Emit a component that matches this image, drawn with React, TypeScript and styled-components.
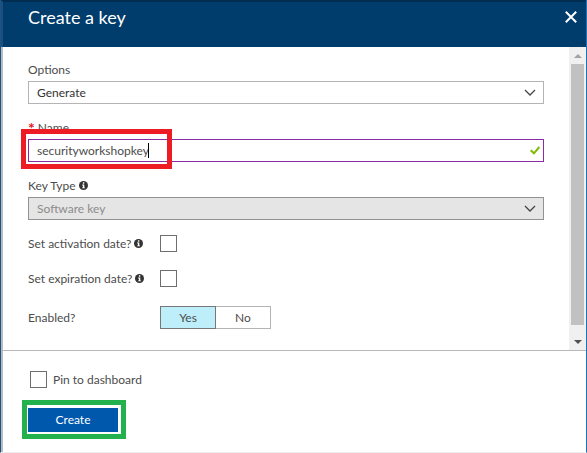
import React, { useState } from "react";
import styled, { createGlobalStyle } from "styled-components";

const GlobalStyle = createGlobalStyle`
  * { box-sizing: border-box; }
  body {
    margin: 0;
    background: #fff;
    color: #4c4c4c;
    font: 12px/16px Lato, "Noto Sans", sans-serif;
  }
  button, input, select { font: inherit; color: inherit; margin: 0; }
`;

const Blade = styled.main`
  display: flex;
  flex-direction: column;
  min-height: 100vh;
  border-left: 1px solid #1b5288;
  border-right: 1px solid #2171b5;
  border-bottom: 1px solid #efefef;
`;

const Header = styled.header`
  display: flex;
  justify-content: space-between;
  align-items: flex-start;
  height: 47px;
  padding: 3px 9px 0 25px;
  background: #003c6c;
  border-top: 2px solid #002c50;
  border-left: 2px solid #1c4f7d;
  color: #fff;
`;

const Title = styled.h1`
  margin: 0;
  font-size: 18px;
  line-height: 25px;
  font-weight: 400;
`;

const CloseButton = styled.button`
  display: flex;
  padding: 6px 0;
  border: 0;
  background: none;
  color: #fff;
`;

const Body = styled.div`
  display: flex;
  flex: 1;
  border-left: 2px solid #bababa;
`;

const Form = styled.form`
  flex: 1;
  min-width: 0;
  padding: 14px 25px 12px;
`;

const Field = styled.div`
  margin-bottom: 15px;
`;

const FieldLabel = styled.label`
  display: flex;
  align-items: center;
  gap: 3px;
  height: 17px;
  margin-bottom: 3px;
  white-space: nowrap;
`;

const Required = styled.span`
  color: #e81123;
  font-size: 16px;
  font-weight: 700;
  line-height: 16px;
`;

const Control = styled.div`
  position: relative;
  display: flex;
`;

const Select = styled.select`
  appearance: none;
  width: 100%;
  height: 23px;
  padding: 0 28px 0 8px;
  border: 1px solid #b4b4b4;
  border-radius: 0;
  background: #fff;
  color: #333;
  outline: 0;
  &:disabled {
    border-color: #929292;
    background: #e5e5e5;
    color: #8c8c8c;
    opacity: 1;
  }
`;

const TextInput = styled.input`
  width: 100%;
  height: 23px;
  padding: 0 28px 0 8px;
  border: 1px solid #8a2da5;
  border-radius: 0;
  background: #fff;
  outline: 0;
`;

const ControlIcon = styled.span<{ $right: number }>`
  position: absolute;
  right: ${({ $right }) => $right}px;
  top: 0;
  bottom: 0;
  display: flex;
  align-items: center;
  pointer-events: none;
`;

const Caret = styled.span`
  position: absolute;
  left: 120px;
  top: 4px;
  width: 1px;
  height: 15px;
  background: #000;
`;

const RedFrame = styled.span`
  position: absolute;
  left: -7px;
  top: -10px;
  width: 151px;
  height: 40px;
  border: 5px solid #ed1c24;
  pointer-events: none;
`;

const Options = styled.div`
  display: grid;
  gap: 18px;
`;

const OptionRow = styled.div`
  display: grid;
  grid-template-columns: 132px auto;
  align-items: center;
  justify-content: start;
  min-height: 17px;
`;

const RowLabel = styled.label`
  display: flex;
  align-items: center;
  gap: 3px;
  white-space: nowrap;
`;

const Checkbox = styled.input`
  appearance: none;
  width: 17px;
  height: 17px;
  border: 1px solid #6e6e6e;
  background: #fff;
  &:checked { background: #bdeefa; }
`;

const Toggle = styled.div`
  display: flex;
  padding: 1px 0;
`;

const ToggleButton = styled.button<{ $active: boolean }>`
  width: 56px;
  height: 23px;
  padding: 0;
  border: 1px solid ${({ $active }) => ($active ? "#777" : "#b4b4b4")};
  background: ${({ $active }) => ($active ? "#bdeefa" : "#fff")};
  position: relative;
  z-index: ${({ $active }) => ($active ? 1 : 0)};
  & + & { margin-left: -1px; }
`;

const ScrollTrack = styled.div`
  display: flex;
  flex-direction: column;
  width: 17px;
  padding: 0 2px;
  background: #f0f0f0;
`;

const ScrollThumb = styled.div`
  flex: 1;
  margin-bottom: 8px;
  background: #c1c1c1;
`;

const ScrollArrow = styled.span`
  display: flex;
  align-items: center;
  justify-content: center;
  height: 17px;
`;

const Footer = styled.footer`
  display: flex;
  flex-direction: column;
  align-items: flex-start;
  gap: 12px;
  padding: 20px 19px 13px;
  border-top: 1px solid #b8b8b8;
  border-left: 2px solid #bababa;
`;

const PinLabel = styled.label`
  display: flex;
  align-items: center;
  gap: 6px;
  padding-left: 8px;
  height: 17px;
`;

const GreenFrame = styled.div`
  border: 5px solid #22b14c;
  padding: 3px 3px 2px 1px;
`;

const CreateButton = styled.button`
  display: block;
  width: 90px;
  height: 24px;
  padding: 0;
  border: 0;
  background: #0058ad;
  color: #fff;
`;

const Chevron = () => (
  <svg width="12" height="8" viewBox="0 0 12 8" aria-hidden="true">
    <path d="M1 1 6 6 11 1" fill="none" stroke="#444" strokeWidth="1.3" />
  </svg>
);

const Info = () => (
  <svg width="9" height="9" viewBox="0 0 9 9" aria-hidden="true">
    <circle cx="4.5" cy="4.5" r="4.5" fill="#333" />
    <path d="M3.9 1.3h1.4v1.4H3.9zM3.1 3.5h2.2v2.9H6v.9H3.1v-.9h.8V4.4h-.8z" fill="#fff" />
  </svg>
);

export default function App() {
  const [name, setName] = useState("securityworkshopkey");
  const [enabled, setEnabled] = useState(true);

  return (
    <>
      <GlobalStyle />
      <Blade>
        <Header>
          <Title>Create a key</Title>
          <CloseButton aria-label="Close">
            <svg width="12" height="12" viewBox="0 0 12 12" aria-hidden="true">
              <path d="M.8.8 11.2 11.2M11.2.8.8 11.2" stroke="currentColor" strokeWidth="2" />
            </svg>
          </CloseButton>
        </Header>
        <Body>
          <Form id="key-form" onSubmit={(e) => e.preventDefault()}>
            <Field>
              <FieldLabel htmlFor="options">Options</FieldLabel>
              <Control>
                <Select id="options"><option>Generate</option></Select>
                <ControlIcon $right={8}><Chevron /></ControlIcon>
              </Control>
            </Field>
            <Field>
              <FieldLabel htmlFor="name"><Required>*</Required>Name</FieldLabel>
              <Control>
                <TextInput id="name" value={name} onChange={(e) => setName(e.target.value)} />
                <Caret />
                <ControlIcon $right={4}>
                  <svg width="10" height="9" viewBox="0 0 10 9" aria-hidden="true">
                    <path d="M.7 4.2 4 7.3 9.3 1" fill="none" stroke="#7fba00" strokeWidth="2" />
                  </svg>
                </ControlIcon>
                <RedFrame />
              </Control>
            </Field>
            <Field>
              <FieldLabel htmlFor="type">Key Type <Info /></FieldLabel>
              <Control>
                <Select id="type" disabled><option>Software key</option></Select>
                <ControlIcon $right={8}><Chevron /></ControlIcon>
              </Control>
            </Field>
            <Options>
              <OptionRow>
                <RowLabel htmlFor="activation">Set activation date? <Info /></RowLabel>
                <Checkbox type="checkbox" id="activation" />
              </OptionRow>
              <OptionRow>
                <RowLabel htmlFor="expiration">Set expiration date? <Info /></RowLabel>
                <Checkbox type="checkbox" id="expiration" />
              </OptionRow>
              <OptionRow>
                <RowLabel as="span" id="enabled">Enabled?</RowLabel>
                <Toggle role="group" aria-labelledby="enabled">
                  <ToggleButton type="button" $active={enabled} aria-pressed={enabled} onClick={() => setEnabled(true)}>Yes</ToggleButton>
                  <ToggleButton type="button" $active={!enabled} aria-pressed={!enabled} onClick={() => setEnabled(false)}>No</ToggleButton>
                </Toggle>
              </OptionRow>
            </Options>
          </Form>
          <ScrollTrack aria-hidden="true">
            <ScrollArrow>
              <svg width="8" height="4" viewBox="0 0 8 4"><path d="M0 4 4 0 8 4z" fill="#a3a3a3" /></svg>
            </ScrollArrow>
            <ScrollThumb />
            <ScrollArrow>
              <svg width="8" height="4" viewBox="0 0 8 4"><path d="M0 0 4 4 8 0z" fill="#505050" /></svg>
            </ScrollArrow>
          </ScrollTrack>
        </Body>
        <Footer>
          <PinLabel><Checkbox type="checkbox" />Pin to dashboard</PinLabel>
          <GreenFrame><CreateButton type="submit" form="key-form">Create</CreateButton></GreenFrame>
        </Footer>
      </Blade>
    </>
  );
}
